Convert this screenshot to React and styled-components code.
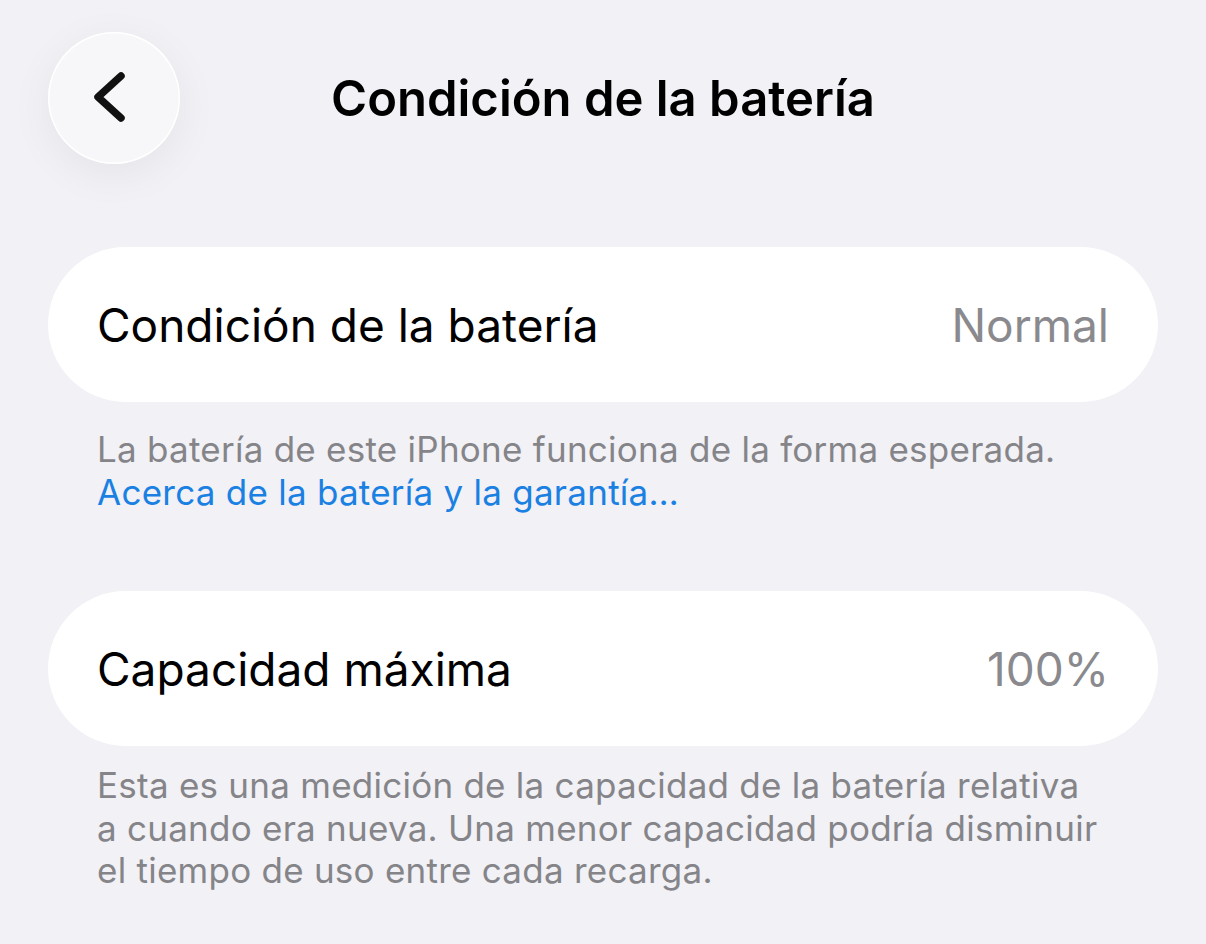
import React from "react";
import styled, { createGlobalStyle } from "styled-components";

const Global = createGlobalStyle`
  html, body { margin: 0; padding: 0; background: #f1f1f6; }
  body { font-family: Inter, "Noto Sans", sans-serif; -webkit-font-smoothing: antialiased; }
`;

const Page = styled.div`
  width: 1206px;
  height: 944px;
  box-sizing: border-box;
  background: #f1f1f6;
  padding: 32px 48px 0 48px;
  display: flex;
  flex-direction: column;
  overflow: hidden;
`;

const Header = styled.header`
  position: relative;
  height: 132px;
  display: flex;
  align-items: center;
  justify-content: center;
`;

const BackButton = styled.button`
  position: absolute;
  left: 0;
  top: 0;
  width: 132px;
  height: 132px;
  border-radius: 50%;
  border: none;
  background: #f7f7f9;
  box-shadow: 0 10px 44px rgba(0, 0, 0, 0.06), 0 0 0 1.5px rgba(255, 255, 255, 0.95) inset;
  display: flex;
  align-items: center;
  justify-content: center;
  padding: 0;
`;

const Chevron = styled.svg`
  margin-right: 8px;
`;

const Title = styled.h1`
  margin: 0;
  font-size: 49px;
  font-weight: 600;
  color: #000;
  letter-spacing: 0px;
`;

const Section = styled.section`
  margin-top: ${(p) => p.$top}px;
  display: flex;
  flex-direction: column;
`;

const Card = styled.div`
  height: 155px;
  border-radius: 78px;
  background: #ffffff;
  display: flex;
  align-items: center;
  justify-content: space-between;
  padding: 0 49px;
`;

const Label = styled.span`
  font-size: 46px;
  color: #000;
`;

const Value = styled.span`
  font-size: 46px;
  color: #8a8a8e;
`;

const Footer = styled.p`
  margin: ${(p) => p.$gap}px 0 0 0;
  padding: 0 49px;
  font-size: 35px;
  line-height: 42.5px;
  letter-spacing: 0.25px;
  color: #858589;
`;

const Link = styled.a`
  color: #1a80e2;
  text-decoration: none;
`;

export default function App() {
  return (
    <>
      <Global />
      <Page>
        <Header>
          <BackButton aria-label="Atrás">
            <Chevron width="40" height="60" viewBox="0 0 40 60" fill="none">
              <path d="M31 8 L8 29 L31 50" stroke="#111" strokeWidth="7.5" strokeLinecap="round" strokeLinejoin="round" />
            </Chevron>
          </BackButton>
          <Title>Condición de la batería</Title>
        </Header>
        <Section $top={83}>
          <Card>
            <Label>Condición de la batería</Label>
            <Value>Normal</Value>
          </Card>
          <Footer $gap={26}>
            La batería de este iPhone funciona de la forma esperada.
            <br />
            <Link href="#">Acerca de la batería y la garantía…</Link>
          </Footer>
        </Section>
        <Section $top={78}>
          <Card>
            <Label>Capacidad máxima</Label>
            <Value>100%</Value>
          </Card>
          <Footer $gap={18}>
            Esta es una medición de la capacidad de la batería relativa
            <br />
            a cuando era nueva. Una menor capacidad podría disminuir
            <br />
            el tiempo de uso entre cada recarga.
          </Footer>
        </Section>
      </Page>
    </>
  );
}
